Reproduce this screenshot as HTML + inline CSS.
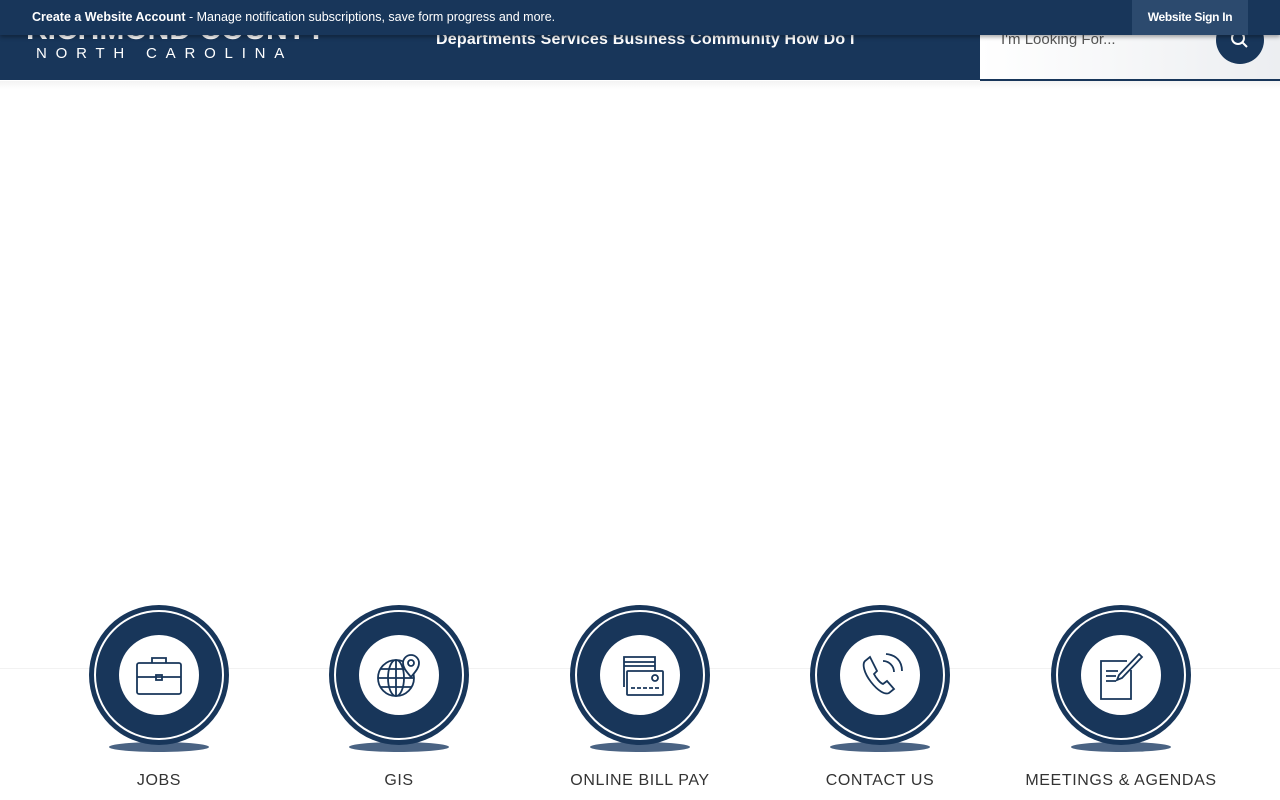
<!DOCTYPE html>
<html><head><style>
body{margin:0;width:1280px;height:800px;overflow:hidden;background:#fff;font-family:"Liberation Sans",sans-serif;position:relative}
.hdr{position:absolute;left:0;top:0;width:1280px;height:80px;background:#18365a}
.top{position:absolute;left:0;top:0;width:1280px;height:35px;background:#18365a;box-shadow:0 2px 4px rgba(0,0,0,.35);z-index:3}
.top .msg{position:absolute;left:32px;top:10px;color:#fff;font-size:12.5px;letter-spacing:0}
.top .sign{position:absolute;left:1132px;top:0;width:116px;height:35px;background:#2c4a6e;color:#fff;font-size:12px;font-weight:bold;text-align:center;line-height:35px;letter-spacing:-.3px}
.logo1{position:absolute;left:26px;top:13px;color:#fff;font-size:30px;font-weight:bold;letter-spacing:0;z-index:1}
.logo2{position:absolute;left:36px;top:45px;color:#fff;font-size:15px;letter-spacing:8.8px}
.nav{position:absolute;left:436px;top:31px;color:#fff;font-size:16px;font-weight:bold;letter-spacing:.2px}
.search{position:absolute;left:980px;top:0;width:300px;height:79px;background:linear-gradient(90deg,#fff,#eceef1);border-bottom:2px solid #18365a}
.search span{position:absolute;left:21px;top:31px;color:#555;font-size:15px}
.sbtn{position:absolute;left:1216px;top:16px;width:48px;height:48px;border-radius:50%;background:#18365a;z-index:2}
.band{position:absolute;left:0;top:81px;width:1280px;height:8px;background:linear-gradient(#f3f3f3,#fff)}
.line{position:absolute;left:0;top:668px;width:1280px;height:1px;background:#f2f2f2}
.item{position:absolute;top:605px;width:240px;margin-left:-120px;text-align:center}
.c{position:relative;margin:0 auto;width:140px;height:140px;border-radius:50%;background:#18365a}
.c .ring{position:absolute;left:5px;top:5px;width:126px;height:126px;border:2px solid #fff;border-radius:50%}
.c .in{position:absolute;left:30px;top:30px;width:80px;height:80px;border-radius:50%;background:#fff}
.c svg{position:absolute;left:30px;top:30px}
.sh{margin:-3px auto 0;width:100px;height:10px;border-radius:50%;background:#4a6383}
.lb{margin-top:20px;font-size:16px;letter-spacing:.6px;color:#333}
</style></head><body>
<div class="hdr"></div>
<div class="logo1">RICHMOND COUNTY</div>
<div class="logo2">NORTH CAROLINA</div>
<div class="nav">Departments Services Business Community How Do I</div>
<div class="search"><span>I'm Looking For...</span></div>
<div class="sbtn"><svg width="48" height="48" viewBox="0 0 48 48" fill="none" stroke="#fff" stroke-width="2"><circle cx="22" cy="22" r="6"/><path d="M26.5 26.5 L31 31"/></svg></div>
<div class="top"><div class="msg"><b>Create a Website Account</b> - Manage notification subscriptions, save form progress and more.</div><div class="sign">Website Sign In</div></div>
<div class="band"></div>
<div class="line"></div>

<div class="item" style="left:159px"><div class="c"><div class="ring"></div><div class="in"></div>
<svg width="80" height="80" viewBox="0 0 80 80" fill="none" stroke="#18365a" stroke-width="1.8"><rect x="18" y="28" width="44" height="31" rx="2"/><path d="M33 28v-5h14v5M18 42h44"/><rect x="37" y="40" width="6" height="5"/></svg></div><div class="sh"></div><div class="lb">JOBS</div></div>

<div class="item" style="left:399px"><div class="c"><div class="ring"></div><div class="in"></div>
<svg width="80" height="80" viewBox="0 0 80 80" fill="none" stroke="#18365a" stroke-width="1.8"><circle cx="37" cy="43" r="18"/><ellipse cx="37" cy="43" rx="8" ry="18"/><path d="M19 43h36M22 34h30M22 52h30M37 25v36"/><path d="M52 42c-6-7-8-10-8-14a8 8 0 0 1 16 0c0 4-2 7-8 14z" fill="#fff"/><circle cx="52" cy="28" r="3"/></svg></div><div class="sh"></div><div class="lb">GIS</div></div>

<div class="item" style="left:640px"><div class="c"><div class="ring"></div><div class="in"></div>
<svg width="80" height="80" viewBox="0 0 80 80" fill="none" stroke="#18365a" stroke-width="1.8"><path d="M24 52V22h31v13"/><path d="M24 27h31M24 31h31"/><rect x="27" y="36" width="36" height="24" rx="1" fill="#fff"/><circle cx="55" cy="43" r="3"/><path d="M31 53h28" stroke-dasharray="4 2"/></svg></div><div class="sh"></div><div class="lb">ONLINE BILL PAY</div></div>

<div class="item" style="left:880px"><div class="c"><div class="ring"></div><div class="in"></div>
<svg width="80" height="80" viewBox="0 0 80 80" fill="none" stroke="#18365a" stroke-width="1.8"><path d="M30 22l-5 4c-3 3-1 12 6 21s14 13 18 11l5-4-7-8-4 3c-3-1-7-6-9-10l3-3z"/><path d="M43 26c6 0 11 5 11 11M46 19c10 1 16 7 16 17"/></svg></div><div class="sh"></div><div class="lb">CONTACT US</div></div>

<div class="item" style="left:1121px"><div class="c"><div class="ring"></div><div class="in"></div>
<svg width="80" height="80" viewBox="0 0 80 80" fill="none" stroke="#18365a" stroke-width="1.8"><path d="M50 35v29H20V26h26"/><path d="M25 36h12M25 41h10M25 46h10"/><path d="M58 19l3 3-20 21-5 2 2-5z" fill="#fff"/></svg></div><div class="sh"></div><div class="lb">MEETINGS &amp; AGENDAS</div></div>
</body></html>
